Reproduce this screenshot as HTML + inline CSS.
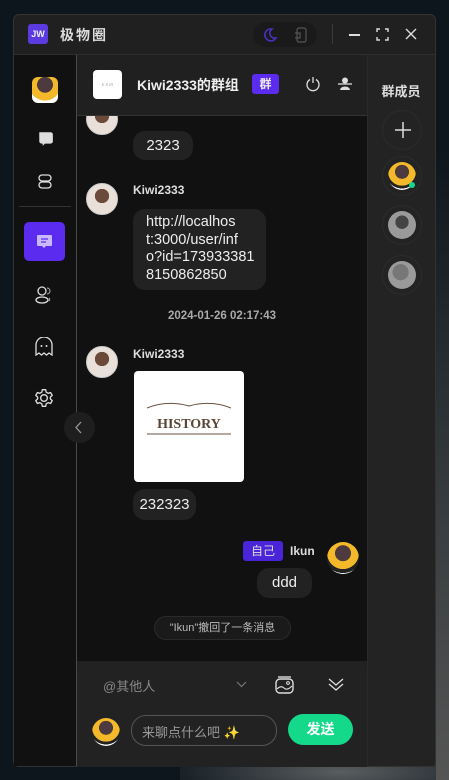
<!DOCTYPE html>
<html><head><meta charset="utf-8"><style>
*{margin:0;padding:0;box-sizing:border-box}
body{width:449px;height:780px;background:#0e161d;position:relative;overflow:hidden;font-family:"Liberation Sans","Noto Sans CJK SC",sans-serif;color:#eee}
.a{position:absolute}
.win{left:13px;top:14px;width:423px;height:753px;background:#202020;border:1px solid #333;border-radius:6px;overflow:hidden}
.bub{position:absolute;background:#222;border-radius:12px;color:#eee;font-size:15px}
.av{position:absolute;width:32px;height:32px;border-radius:50%;background:radial-gradient(circle at 50% 40%,#6b4a3a 0 30%,#e9e0da 31% 100%);border:1px solid #ccc}
.nm{position:absolute;font-size:12px;font-weight:bold;color:#ddd}
.mem{position:absolute;left:382px;width:40px;height:40px;border-radius:50%;border:1px solid #2c2c2c}
svg{position:absolute}
</style></head><body>
<div class="a" style="left:180px;top:740px;width:269px;height:40px;background:radial-gradient(ellipse at 60% 80%,#5a5e60,#1a2228 70%)"></div>
<div class="a" style="left:436px;top:150px;width:13px;height:630px;background:linear-gradient(#0e161d,#3a3e40 60%,#555)"></div>
<div class="a win"></div>
<!-- title bar -->
<div class="a" style="left:28px;top:24px;width:20px;height:20px;background:#5b3be0;border-radius:3px;font-size:9px;font-weight:bold;text-align:center;line-height:20px">JW</div>
<div class="a" style="left:60px;top:25px;font-size:14px;font-weight:bold;letter-spacing:2px;color:#ddd">极物圈</div>
<div class="a" style="left:253px;top:22px;width:64px;height:25px;background:#1a1a1a;border-radius:13px"></div>
<svg style="left:262px;top:27px" width="16" height="16" viewBox="0 0 16 16"><path d="M10 2A6 6 0 1 0 14 11A5 5 0 0 1 10 2Z" fill="none" stroke="#4a2fc0" stroke-width="1.6"/></svg>
<svg style="left:294px;top:27px" width="14" height="16" viewBox="0 0 14 16"><rect x="3" y="1" width="9" height="14" rx="2" fill="none" stroke="#555" stroke-width="1.2"/><path d="M1 6h5v5H1" fill="none" stroke="#555" stroke-width="1.2"/></svg>
<div class="a" style="left:332px;top:24px;width:1px;height:20px;background:#3a3a3a"></div>
<div class="a" style="left:349px;top:34px;width:11px;height:1.5px;background:#ddd"></div>
<svg style="left:376px;top:28px" width="13" height="13" viewBox="0 0 13 13"><path d="M1 4V1h3M9 1h3v3M12 9v3H9M4 12H1V9" fill="none" stroke="#ddd" stroke-width="1.4"/></svg>
<svg style="left:405px;top:28px" width="12" height="12" viewBox="0 0 12 12"><path d="M1 1l10 10M11 1L1 11" stroke="#ddd" stroke-width="1.4"/></svg>
<div class="a" style="left:14px;top:54px;width:421px;height:1px;background:#2e2e2e"></div>
<!-- sidebar -->
<div class="a" style="left:14px;top:55px;width:62px;height:711px;background:#111"></div>
<div class="a" style="left:76px;top:55px;width:1px;height:711px;background:#4a4a4a"></div>
<div class="a" style="left:32px;top:77px;width:26px;height:26px;border-radius:6px;background:radial-gradient(circle at 50% 30%,#4c3a3e 0 35%,#f3b92a 36% 70%,#fff 71%)"></div>
<svg style="left:37px;top:130px" width="17" height="17" viewBox="0 0 15 15"><path d="M2 2h10a2 2 0 0 1 2 2v6a2 2 0 0 1-2 2H7l-2 2v-2H4a2 2 0 0 1-2-2Z" fill="#ddd"/></svg>
<svg style="left:37px;top:174px" width="16" height="16" viewBox="0 0 16 16"><rect x="2" y="1" width="12" height="6" rx="3" fill="none" stroke="#ddd" stroke-width="1.3"/><rect x="2" y="8" width="12" height="6" rx="3" fill="none" stroke="#ddd" stroke-width="1.3"/></svg>
<div class="a" style="left:19px;top:206px;width:52px;height:1px;background:#333"></div>
<div class="a" style="left:24px;top:222px;width:41px;height:39px;background:#5b2cf0;border-radius:5px"></div>
<svg style="left:36px;top:234px" width="17" height="16" viewBox="0 0 17 16"><path d="M2 1h13a1 1 0 0 1 1 1v9a1 1 0 0 1-1 1H10l-2 2-2-2H2a1 1 0 0 1-1-1V2a1 1 0 0 1 1-1Z" fill="#c9b8ff"/><path d="M5 5h7M5 8h5" stroke="#5b2cf0" stroke-width="1.3"/></svg>
<svg style="left:34px;top:285px" width="20" height="20" viewBox="0 0 20 20"><circle cx="8" cy="6" r="4" fill="none" stroke="#ddd" stroke-width="1.3"/><ellipse cx="8" cy="15" rx="6" ry="3" fill="none" stroke="#ddd" stroke-width="1.3"/><path d="M13 3a3 3 0 0 1 0 6M15 13a2 2 0 0 1 0 3" fill="none" stroke="#999" stroke-width="1.2"/></svg>
<svg style="left:35px;top:337px" width="18" height="19" viewBox="0 0 18 19"><path d="M1 18V8a8 8 0 0 1 16 0v10l-3-2-2.5 2-2.5-2-2.5 2L4 16Z" fill="none" stroke="#ddd" stroke-width="1.3"/><circle cx="6.5" cy="9" r="1" fill="#ddd"/><circle cx="11.5" cy="9" r="1" fill="#ddd"/></svg>
<svg style="left:34px;top:388px" width="20" height="20" viewBox="0 0 24 24"><path d="M12 8a4 4 0 1 0 0 8 4 4 0 0 0 0-8Z" fill="none" stroke="#ddd" stroke-width="1.6"/><path d="M10 2h4l.6 3 2.4 1.4 2.9-1 2 3.5-2.3 2v2.2l2.3 2-2 3.5-2.9-1L14.6 19 14 22h-4l-.6-3L7 17.6l-2.9 1-2-3.5 2.3-2v-2.2l-2.3-2 2-3.5 2.9 1L9.4 5Z" fill="none" stroke="#ddd" stroke-width="1.6" stroke-linejoin="round"/></svg>
<!-- chat header -->
<div class="a" style="left:77px;top:55px;width:290px;height:60px;background:#202020;border-bottom:1px solid #333"></div>
<div class="a" style="left:93px;top:70px;width:29px;height:29px;background:#fff;border-radius:4px;font-size:4px;color:#999;text-align:center;line-height:29px">E S IR</div>
<div class="a" style="left:137px;top:75px;font-size:14px;font-weight:bold;color:#eee">Kiwi2333的群组</div>
<div class="a" style="left:252px;top:74px;width:27px;height:20px;background:#5b2cf0;border-radius:3px;font-size:12px;font-weight:bold;text-align:center;line-height:20px">群</div>
<svg style="left:305px;top:76px" width="16" height="16" viewBox="0 0 16 16"><path d="M5 3.5a6 6 0 1 0 6 0M8 1v6" fill="none" stroke="#ddd" stroke-width="1.3"/></svg>
<svg style="left:337px;top:77px" width="16" height="14" viewBox="0 0 16 14"><circle cx="8" cy="3.5" r="3" fill="#ddd"/><path d="M1 7h14" stroke="#ddd" stroke-width="1.3"/><path d="M3 13a5 3.5 0 0 1 10 0Z" fill="#ddd"/></svg>
<!-- messages -->
<div class="a" style="left:77px;top:116px;width:290px;height:545px;background:#111"></div>
<div class="av" style="left:86px;top:103px"></div>
<div class="a" style="left:77px;top:103px;width:290px;height:13px;background:#202020;border-bottom:1px solid #333"></div>
<div class="bub" style="left:133px;top:131px;width:60px;height:29px;line-height:29px;text-align:center">2323</div>
<div class="av" style="left:86px;top:183px"></div>
<div class="nm" style="left:133px;top:183px">Kiwi2333</div>
<div class="bub" style="left:133px;top:209px;width:133px;height:81px;padding:5px 0 0 13px;line-height:17.5px;font-size:14.5px;white-space:nowrap">http://localhos<br>t:3000/user/inf<br>o?id=173933381<br>8150862850</div>
<div class="a" style="left:77px;top:310px;width:290px;text-align:center;font-size:11.5px;font-weight:bold;color:#aaa">2024-01-26 02:17:43</div>
<div class="av" style="left:86px;top:346px"></div>
<div class="nm" style="left:133px;top:347px">Kiwi2333</div>
<div class="a" style="left:134px;top:371px;width:110px;height:111px;background:#fff;border-radius:4px"></div>
<svg style="left:147px;top:400px" width="84" height="40" viewBox="0 0 84 40"><path d="M0 8Q20 0 42 6Q64 0 84 8M0 34h84" stroke="#6b5040" stroke-width="1" fill="none"/><text x="42" y="28" text-anchor="middle" font-family="Liberation Serif,serif" font-weight="bold" font-size="14" fill="#5a4535">HISTORY</text></svg>
<div class="bub" style="left:133px;top:489px;width:63px;height:31px;line-height:31px;text-align:center">232323</div>
<div class="a" style="left:327px;top:542px;width:32px;height:32px;border-radius:50%;background:radial-gradient(circle at 50% 35%,#4c3a3e 0 30%,#f3b92a 31% 60%,#222 61% 75%,#fff 76%)"></div>
<div class="a" style="left:243px;top:541px;width:40px;height:20px;background:#4a24d8;border-radius:3px;font-size:12px;text-align:center;line-height:20px;color:#ddd">自己</div>
<div class="nm" style="left:290px;top:544px">Ikun</div>
<div class="bub" style="left:257px;top:568px;width:55px;height:30px;line-height:30px;text-align:center">ddd</div>
<div class="a" style="left:154px;top:616px;width:137px;height:24px;background:#1a1a1a;border:1px solid #2a2a2a;border-radius:12px;font-size:11px;color:#bbb;text-align:center;line-height:22px">"Ikun"撤回了一条消息</div>
<div class="a" style="left:64px;top:412px;width:31px;height:31px;border-radius:50%;background:#1e1e1e"></div>
<svg style="left:74px;top:421px" width="10" height="13" viewBox="0 0 10 13"><path d="M7 1L2 6.5 7 12" fill="none" stroke="#999" stroke-width="1.3"/></svg>
<!-- input -->
<div class="a" style="left:77px;top:661px;width:290px;height:106px;background:#222;border-radius:10px 10px 0 0"></div>
<div class="a" style="left:103px;top:676px;font-size:13px;color:#888">@其他人</div>
<svg style="left:236px;top:681px" width="11" height="7" viewBox="0 0 11 7"><path d="M1 1l4.5 4.5L10 1" fill="none" stroke="#777" stroke-width="1.2"/></svg>
<svg style="left:275px;top:675px" width="19" height="19" viewBox="0 0 19 19"><rect x="1" y="4" width="17" height="14" rx="4" fill="none" stroke="#ddd" stroke-width="1.4"/><path d="M3 2h13" stroke="#ddd" stroke-width="1.4"/><path d="M2 14q4-4 7-1t8-2" fill="none" stroke="#ddd" stroke-width="1.2"/><circle cx="13" cy="8" r="1.4" fill="none" stroke="#ddd"/></svg>
<svg style="left:328px;top:678px" width="16" height="13" viewBox="0 0 16 13"><path d="M1 1l7 6 7-6M1 6l7 6 7-6" fill="none" stroke="#ddd" stroke-width="1.3"/></svg>
<div class="a" style="left:92px;top:718px;width:28px;height:28px;border-radius:50%;background:radial-gradient(circle at 50% 35%,#4c3a3e 0 30%,#f3b92a 31% 60%,#222 61% 72%,#fff 73%)"></div>
<div class="a" style="left:131px;top:715px;width:146px;height:31px;border:1px solid #555;border-radius:15px;font-size:13px;color:#999;padding:6px 0 0 10px">来聊点什么吧 <span style="color:#f5d90a">✨</span></div>
<div class="a" style="left:288px;top:714px;width:65px;height:31px;background:#14d98a;border-radius:16px;font-size:14px;font-weight:bold;text-align:center;line-height:31px;color:#fff">发送</div>
<!-- right panel -->
<div class="a" style="left:367px;top:55px;width:68px;height:711px;background:#232323;border-left:1px solid #2a2a2a"></div>
<div class="a" style="left:367px;top:81px;width:68px;text-align:center;font-size:13px;font-weight:bold;color:#ddd">群成员</div>
<div class="mem" style="top:110px"></div>
<svg style="left:394px;top:121px" width="18" height="18" viewBox="0 0 18 18"><path d="M9 1v16M1 9h16" stroke="#ddd" stroke-width="1.5"/></svg>
<div class="mem" style="top:156px"></div>
<div class="a" style="left:388px;top:162px;width:28px;height:28px;border-radius:50%;background:radial-gradient(circle at 50% 35%,#4c3a3e 0 30%,#f3b92a 31% 60%,#222 61% 72%,#fff 73%)"></div>
<div class="a" style="left:409px;top:182px;width:6px;height:6px;border-radius:50%;background:#14d98a"></div>
<div class="mem" style="top:205px"></div>
<div class="a" style="left:388px;top:211px;width:28px;height:28px;border-radius:50%;background:radial-gradient(circle at 50% 40%,#444 0 30%,#9a9a9a 31%)"></div>
<div class="mem" style="top:255px"></div>
<div class="a" style="left:388px;top:261px;width:28px;height:28px;border-radius:50%;background:radial-gradient(circle at 45% 40%,#777 0 35%,#9a9a9a 36%)"></div>
</body></html>
